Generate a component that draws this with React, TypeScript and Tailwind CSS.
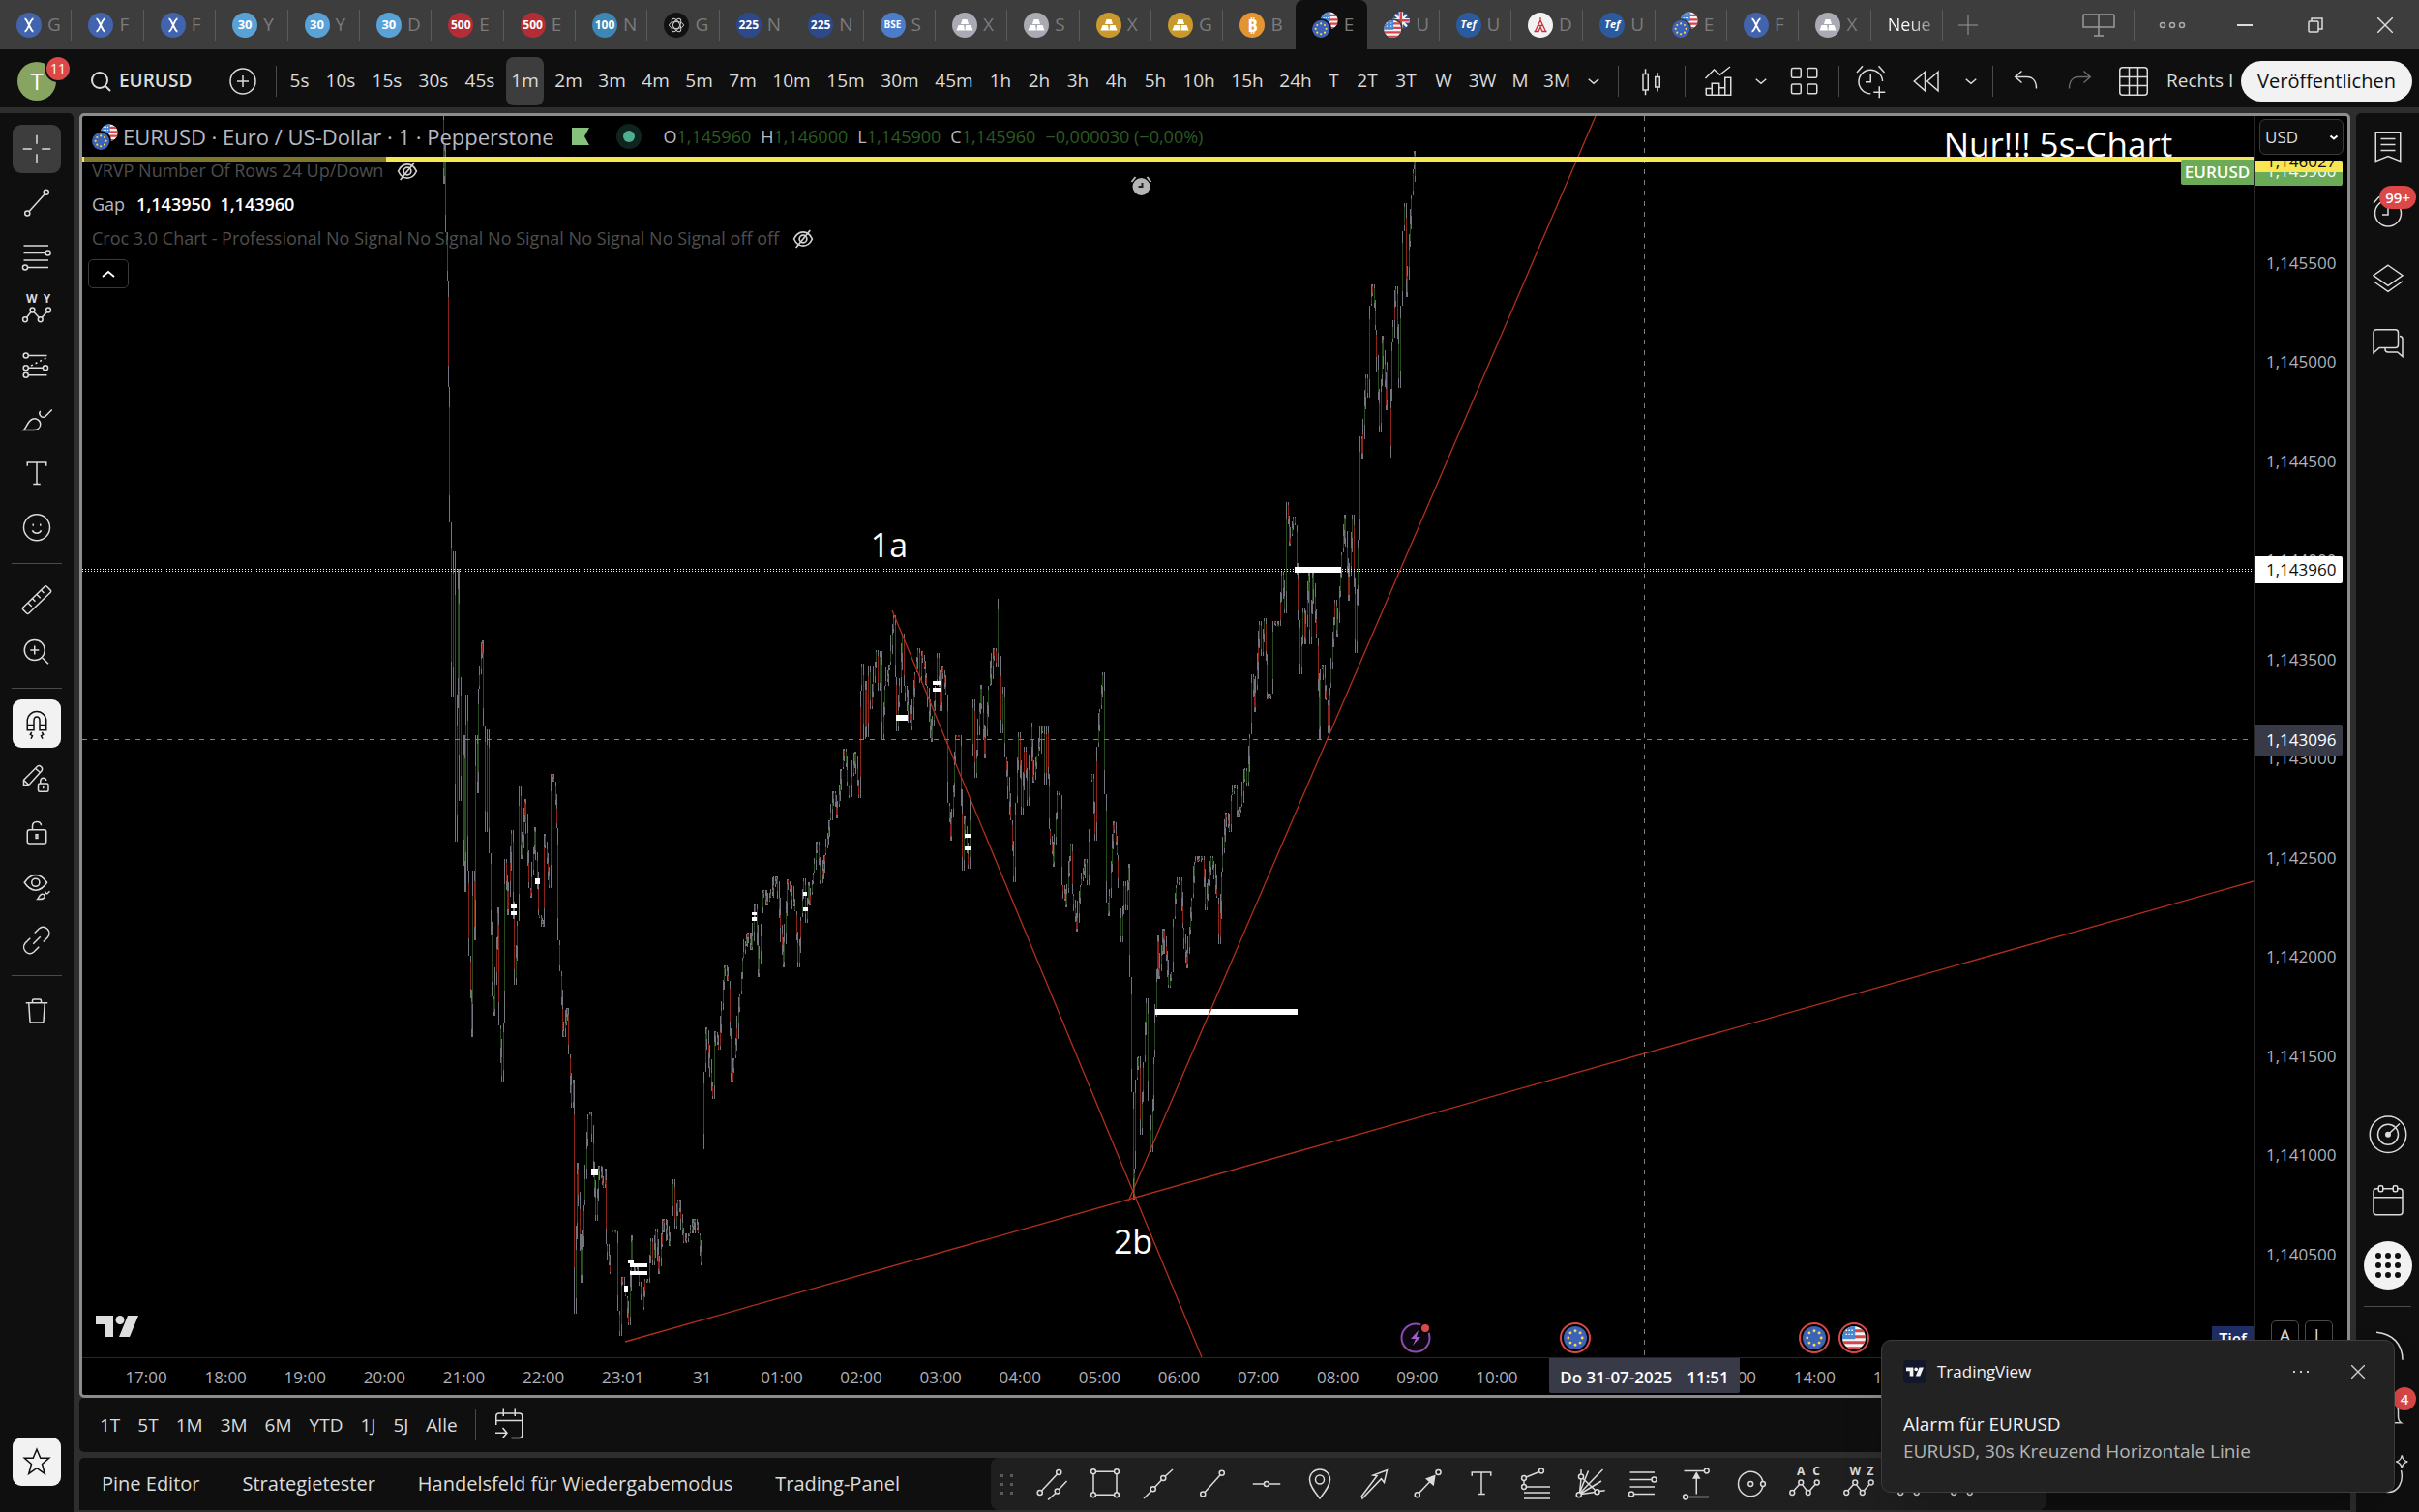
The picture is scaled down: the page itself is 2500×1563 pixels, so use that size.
import { useMemo, useState, type ReactNode } from "react";

type TabIcon = "x" | "30" | "500" | "100" | "225" | "ai" | "bse" | "silver" | "gold" | "btc" | "eu" | "uk" | "tef" | "dax";

const TABS: [TabIcon, string][] = [
  ["x", "G"],
  ["x", "F"],
  ["x", "F"],
  ["30", "Y"],
  ["30", "Y"],
  ["30", "D"],
  ["500", "E"],
  ["500", "E"],
  ["100", "N"],
  ["ai", "G"],
  ["225", "N"],
  ["225", "N"],
  ["bse", "S"],
  ["silver", "X"],
  ["silver", "S"],
  ["gold", "X"],
  ["gold", "G"],
  ["btc", "B"],
  ["eu", "E"],
  ["uk", "U"],
  ["tef", "U"],
  ["dax", "D"],
  ["tef", "U"],
  ["eu", "E"],
  ["x", "F"],
  ["silver", "X"],
];
const ACTIVE_TAB = 18;

const INTERVALS: { width: string; items: string[] }[] = [
  { width: "w-[37px]", items: ["5s"] },
  { width: "w-[48px]", items: ["10s", "15s", "30s", "45s"] },
  { width: "w-[45px]", items: ["1m", "2m", "3m", "4m", "5m", "7m"] },
  { width: "w-[56px]", items: ["10m", "15m", "30m", "45m"] },
  { width: "w-[40px]", items: ["1h", "2h", "3h", "4h", "5h"] },
  { width: "w-[50px]", items: ["10h", "15h", "24h"] },
  { width: "w-[29px]", items: ["T"] },
  { width: "w-[40px]", items: ["2T", "3T"] },
  { width: "w-[38px]", items: ["W"] },
  { width: "w-[42px]", items: ["3W"] },
  { width: "w-[36px]", items: ["M"] },
  { width: "w-[40px]", items: ["3M"] },
];

const RANGES = ["1T", "5T", "1M", "3M", "6M", "YTD", "1J", "5J", "Alle"];

const PRICES = [
  "1,145500",
  "1,145000",
  "1,144500",
  "1,144000",
  "1,143500",
  "1,143000",
  "1,142500",
  "1,142000",
  "1,141500",
  "1,141000",
  "1,140500",
];

// the empty slots lie under the crosshair's date label
const TIMES = [
  "17:00", "18:00", "19:00", "20:00", "21:00", "22:00", "23:01", "31", "01:00",
  "02:00", "03:00", "04:00", "05:00", "06:00", "07:00", "08:00", "09:00", "10:00",
  "", "", "13:00", "14:00", "15:00", "16:00", "17:00", "18:00", "19:00",
];

// swing points of the 1m series in chart units
const SWINGS: number[][] = [
  [458, 112], [459, 190], [460, 150], [461, 240], [463, 290], [464, 400], [465, 540], [467, 720], [469, 570], [471, 870],
  [474, 588], [475, 828], [477, 700], [479, 895], [480, 760], [481, 922], [482, 718], [484, 900], [485, 988], [488, 1072],
  [489, 900], [491, 972], [492, 760], [494, 820], [495, 712], [499, 662], [500, 750], [502, 860], [504, 754], [506, 882],
  [509, 1030], [511, 1050], [515, 938], [516, 1060], [519, 1118], [521, 1058], [522, 888], [525, 946], [529, 858], [532, 1018],
  [535, 952], [537, 812], [539, 888], [543, 826], [547, 918], [549, 928], [553, 855], [557, 946], [562, 958], [563, 862],
  [568, 918], [570, 800], [573, 808], [576, 856], [577, 972], [579, 1004], [582, 1072], [587, 1042], [588, 1090], [591, 1145],
  [593, 1116], [594, 1358], [597, 1202], [601, 1326], [604, 1246], [608, 1152], [611, 1150], [616, 1262], [619, 1205], [624, 1228],
  [626, 1208], [627, 1286], [631, 1317], [633, 1272], [637, 1273], [639, 1355], [641, 1381], [643, 1320], [647, 1340], [650, 1370],
  [653, 1277], [654, 1308], [660, 1315], [664, 1354], [667, 1322], [670, 1326], [673, 1280], [675, 1308], [678, 1270], [681, 1317],
  [686, 1260], [693, 1288], [696, 1219], [698, 1270], [701, 1240], [707, 1285], [713, 1275], [718, 1260], [722, 1275], [725, 1308],
  [726, 1188], [728, 1108], [730, 1062], [737, 1136], [739, 1066], [743, 1085], [749, 998], [753, 1014], [756, 1119], [759, 1094],
  [765, 1028], [768, 990], [773, 964], [777, 982], [781, 934], [784, 1010], [789, 920], [793, 936], [803, 906], [810, 1000],
  [814, 909], [822, 942], [825, 1000], [828, 948], [831, 908], [833, 954], [836, 912], [837, 936], [841, 902], [845, 870],
  [848, 914], [853, 884], [858, 848], [862, 818], [865, 846], [870, 795], [873, 774], [876, 812], [878, 825], [884, 777],
  [888, 825], [890, 714], [891, 686], [893, 764], [895, 704], [896, 762], [898, 688], [900, 733], [906, 672], [908, 714],
  [910, 673], [912, 764], [915, 709], [920, 687], [924, 636], [926, 700], [927, 756], [933, 655], [935, 709], [942, 755],
  [946, 695], [949, 670], [951, 706], [953, 673], [958, 709], [963, 767], [967, 709], [969, 675], [972, 735], [974, 688],
  [978, 718], [980, 830], [983, 869], [988, 760], [992, 760], [995, 900], [997, 844], [1001, 898], [1004, 781], [1006, 723],
  [1008, 804], [1014, 708], [1018, 784], [1022, 709], [1028, 670], [1030, 689], [1032, 619], [1035, 758], [1037, 710], [1039, 783],
  [1045, 848], [1048, 912], [1050, 830], [1053, 757], [1056, 842], [1059, 772], [1062, 833], [1065, 747], [1068, 809], [1072, 781],
  [1078, 750], [1080, 811], [1082, 750], [1085, 857], [1089, 896], [1093, 818], [1096, 822], [1098, 915], [1102, 938], [1107, 872],
  [1109, 924], [1113, 963], [1117, 915], [1122, 888], [1124, 915], [1127, 808], [1129, 800], [1132, 869], [1134, 772], [1137, 733],
  [1140, 695], [1142, 821], [1144, 933], [1146, 947], [1151, 849], [1155, 884], [1159, 974], [1162, 911], [1164, 941], [1167, 893],
  [1168, 1010], [1170, 1129], [1172, 1240], [1173, 1208], [1174, 1116], [1177, 1092], [1179, 1173], [1182, 1098], [1185, 1032], [1187, 1138],
  [1190, 1191], [1193, 1093], [1197, 967], [1198, 1012], [1203, 960], [1208, 1021], [1211, 1005], [1213, 950], [1216, 915], [1220, 907],
  [1223, 959], [1227, 1001], [1232, 928], [1235, 891], [1243, 885], [1246, 941], [1252, 885], [1258, 928], [1260, 976], [1263, 901],
  [1267, 840], [1271, 860], [1273, 822], [1277, 811], [1279, 845], [1283, 834], [1287, 794], [1289, 813], [1292, 759], [1294, 697],
  [1297, 736], [1302, 642], [1304, 678], [1307, 639], [1310, 723], [1314, 717], [1316, 642], [1322, 647], [1325, 591], [1328, 634],
  [1330, 519], [1333, 564], [1337, 534], [1339, 543], [1342, 641], [1344, 697], [1347, 628], [1349, 666], [1353, 591], [1354, 666],
  [1357, 591], [1361, 660], [1364, 764], [1365, 692], [1367, 687], [1371, 724], [1373, 758], [1375, 711], [1380, 620], [1382, 659],
  [1387, 571], [1390, 532], [1394, 621], [1398, 532], [1401, 675], [1404, 558], [1406, 451], [1408, 474], [1412, 387], [1414, 411],
  [1416, 316], [1419, 294], [1422, 341], [1426, 447], [1429, 347], [1433, 424], [1434, 374], [1436, 473], [1439, 354], [1443, 296],
  [1446, 401], [1448, 316], [1450, 239], [1452, 210], [1454, 307], [1459, 202], [1461, 175], [1462, 156], [1463, 188],
];

// x, y, width, height of the open gaps
const GAPS: number[][] = [
  [1195, 1043, 147, 6],
  [1339, 586, 48, 6],
  [927, 739, 12, 6],
  [965, 704, 8, 4],
  [965, 711, 8, 4],
  [998, 862, 6, 4],
  [998, 875, 6, 4],
  [831, 922, 4, 4],
  [831, 938, 5, 4],
  [529, 935, 6, 4],
  [529, 942, 6, 4],
  [554, 908, 5, 6],
  [778, 943, 5, 3],
  [778, 948, 5, 4],
  [612, 1208, 7, 7],
  [650, 1302, 6, 4],
  [652, 1306, 18, 4],
  [652, 1314, 18, 4],
  [646, 1329, 4, 7],
];

type Bar = { x: number; high: number; low: number; bodyTop: number; bodyBottom: number; up: boolean };

function buildBars(): Bar[] {
  let seed = 7;
  const random = () => {
    seed = (seed * 16807) % 2147483647;
    return seed / 2147483647;
  };

  const bars: Bar[] = [];
  for (let i = 1; i < SWINGS.length; i++) {
    const [x0, y0] = SWINGS[i - 1];
    const [x1, y1] = SWINGS[i];
    const steps = Math.max(1, Math.round((x1 - x0) / 1.4));
    for (let s = 0; s < steps; s++) {
      const from = y0 + ((y1 - y0) * s) / steps;
      const to = y0 + ((y1 - y0) * (s + 1)) / steps;
      const wick = 3 + random() * 13;
      const top = Math.min(from, to);
      const bottom = Math.max(from, to);
      const limitTop = Math.min(y0, y1);
      const limitBottom = Math.max(y0, y1);
      bars.push({
        x: Math.round(x0 + ((x1 - x0) * (s + 1)) / steps),
        high: Math.max(limitTop, top - wick),
        low: Math.min(limitBottom, bottom + wick * random()),
        bodyTop: top + (bottom - top) * 0.15,
        bodyBottom: bottom - (bottom - top) * 0.2,
        up: random() > 0.25 ? to < from : to > from,
      });
    }
  }
  return bars;
}

const GLYPHS = {
  cross: <path d="M14 4.5v6M14 17.5v6M4.5 14h6M17.5 14h6" />,
  trend: (
    <>
      <circle cx="20.5" cy="6.5" r="1.7" />
      <circle cx="7.5" cy="21" r="1.7" />
      <path d="M8.8 19.7 19.4 7.9" />
    </>
  ),
  fib: (
    <>
      <path d="M5 6h17M5 11h15M5 16h17M8 21h14" />
      <circle cx="21.7" cy="11" r="1.7" />
      <circle cx="6" cy="21" r="1.7" />
    </>
  ),
  waveWY: (
    <>
      <circle cx="6" cy="19.500" r="1.6" />
      <circle cx="11" cy="13" r="1.6" />
      <circle cx="16.500" cy="19.500" r="1.6" />
      <circle cx="22" cy="13" r="1.6" />
      <path d="m7 18.200 3-3.900M12 14.300l3.500 3.900M17.500 18.200l3.500-3.900" />
      <Label x={10.5} text="W" />
      <Label x={21} text="Y" />
    </>
  ),
  waveAC: (
    <>
      <circle cx="5.500" cy="20" r="1.600" />
      <circle cx="11.500" cy="13" r="1.600" />
      <circle cx="16.500" cy="20" r="1.600" />
      <circle cx="22.500" cy="13" r="1.600" />
      <path d="m6.500 18.700 4-4.500M12.300 14.400l3.300 4.300M17.500 18.700l4-4.500" />
      <Label x={11.5} text="A" />
      <Label x={22} text="C" />
    </>
  ),
  waveWZ: (
    <>
      <circle cx="5.500" cy="20" r="1.600" />
      <circle cx="11.500" cy="13" r="1.600" />
      <circle cx="16.500" cy="20" r="1.600" />
      <circle cx="22.500" cy="13" r="1.600" />
      <path d="m6.500 18.700 4-4.500M12.300 14.400l3.300 4.300M17.500 18.700l4-4.500" />
      <Label x={11.5} text="W" />
      <Label x={22} text="Z" />
    </>
  ),
  position: (
    <>
      <circle cx="6.500" cy="7" r="1.700" />
      <circle cx="6.500" cy="15.500" r="1.700" />
      <circle cx="20" cy="15.500" r="1.700" />
      <circle cx="6.500" cy="20.500" r="1.700" />
      <path d="M8.200 7H21M8.200 15.500h10M8.200 20.500H21" />
      <path strokeDasharray="1.400 2" d="M10 14 21 8.500" />
    </>
  ),
  brush: (
    <path d="M5 21c2-1.500 2.500-6 6-7.500 2.500-1 5.500.8 5.500 3.500s-2.500 4-5 4zM16.500 8c-1.500 1.500 0 5 3 4L24.500 7" />
  ),
  text: <path d="M7.500 8.500V6h13v2.500M14 6v15M11.500 21h5" />,
  smile: (
    <>
      <circle cx="14" cy="13.500" r="9" />
      <path d="M11 15.500c.8 2.600 5.200 2.600 6 0M11.500 11v1.500M16.500 11v1.500" />
    </>
  ),
  ruler: <path d="m4.500 20 15-14.500a1 1 0 0 1 1.400 0l2.600 2.600a1 1 0 0 1 0 1.400L8.500 24a1 1 0 0 1-1.400 0l-2.600-2.600a1 1 0 0 1 0-1.400zM8 16.800l2.500 2.500M11 13.800l2 2M14 11l2.500 2.500M17 8l2 2" />,
  zoom: (
    <>
      <circle cx="12.500" cy="12" r="7" />
      <path d="m17.800 17.300 4.200 4.200M12.500 9v6M9.500 12h6" />
    </>
  ),
  magnet: (
    <path d="M7.500 18.500v-7.300a6.600 6.600 0 0 1 13 0v7.300H16v-6.500c0-3.500-4-3.500-4 0v6.500zM7.500 15H12M16 15h4.500M10.500 20l-1 1.500 1.500 1-1 2M17.500 20l1 1.500-1.500 1 1 2" />
  ),
  pencilLock: (
    <>
      <path d="M5 19v-3.500L14.500 6c1.500-1 4 1 3 3L9 18.500 8 19zM13 7.500l3.500 3M5 15.500 8.500 19" />
      <rect x="15" y="18" width="7" height="5.500" rx="1" />
      <path d="M16.500 18v-1.500c0-3 4-3 4-.5M18.500 20v1.500" />
    </>
  ),
  lock: (
    <>
      <rect x="7.500" y="12.500" width="13" height="9.500" rx="1.500" />
      <path d="M11 12.500V10c0-4 6-4 6-.5" />
      <rect x="13.400" y="15.800" width="1.200" height="2.500" />
    </>
  ),
  eye: (
    <>
      <path d="M5.500 11.500c4.500-7 11-7 15.500 0-4.500 7-11 7-15.500 0z" />
      <circle cx="13.200" cy="11.500" r="2.700" />
      <path d="M14.500 23c1-1 1-3 3-3.500 2-.3 2.700 2 1 3-1 .6-2.500.5-4 .5zM20 17.500c-.5 1 .5 2 1.500 1.500l1.500-1.500" />
    </>
  ),
  link: <path d="m12.500 9 3-3c4-3.500 9.500 2 6 6l-3 3M15.500 18.500l-3.500 3.500c-4 3.500-9-2-6-6L9.500 12.500M11.500 16.500l5-5" />,
  trash: <path d="M6.500 8.500h15M11 8.500V7c0-.8.400-1 1-1h4c.6 0 1 .2 1 1v1.500M8.500 8.500l.8 12.500c0 .6.300 1 1 1h7.400c.7 0 1-.4 1-1l.8-12.500" />,
  star: <path d="m14 5.500 2.500 6h6l-4.800 4.200 1.800 6.600-5.500-3.800-5.500 3.800 1.800-6.600L5.500 11.500h6z" />,
  channel: (
    <>
      <circle cx="19.500" cy="6" r="1.700" />
      <circle cx="6.500" cy="20" r="1.700" />
      <circle cx="18.500" cy="19" r="1.700" />
      <path d="M7.700 18.700 18.300 7.300M12 25l5.300-4.700M19.700 17.700 25 12" />
    </>
  ),
  rectangle: (
    <>
      <path d="M7.500 5.500h13M7.500 21.500h13M6 7v13M22 7v13" />
      <circle cx="6" cy="5.500" r="1.600" />
      <circle cx="22" cy="5.500" r="1.600" />
      <circle cx="6" cy="21.500" r="1.600" />
      <circle cx="22" cy="21.500" r="1.600" />
    </>
  ),
  extended: (
    <>
      <circle cx="17.500" cy="10" r="1.700" />
      <circle cx="10.500" cy="17.500" r="1.700" />
      <path d="m4 24 5.300-5.200M11.700 16.200l4.600-4.900M18.700 8.800 24 4" />
    </>
  ),
  hline: (
    <>
      <circle cx="14" cy="14" r="1.700" />
      <path d="M4.500 14h7.800M15.700 14h7.800" />
    </>
  ),
  pin: (
    <>
      <path d="M14 24C10 19 7 15 7 11a7 7 0 0 1 14 0c0 4-3 8-7 13z" />
      <circle cx="14" cy="11" r="3" />
    </>
  ),
  arrowMarker: <path d="M23 4.500 21 13l-2-2.500L6 24l-.5-1.500L16 8.500 13.500 8z" />,
  arrow: (
    <>
      <circle cx="6.500" cy="21.500" r="1.700" />
      <circle cx="21" cy="6" r="1.700" />
      <path d="M7.800 20.200 17 10.500" />
      <path fill="currentColor" d="m18.500 8.500-1 6-4.500-4z" />
    </>
  ),
  trendFib: (
    <>
      <circle cx="6" cy="10" r="1.600" />
      <circle cx="6" cy="16" r="1.600" />
      <circle cx="18" cy="5" r="1.600" />
      <path d="m7.500 9.300 9-3.600M6 11.600v2.800M7.600 16H24M6 20h18M6 24h18" />
    </>
  ),
  fan: (
    <>
      <circle cx="6.500" cy="21.500" r="1.700" />
      <circle cx="8" cy="9" r="1.700" />
      <circle cx="19" cy="19.500" r="1.700" />
      <path d="M8 4v3.500M7 20 8 10.700M7 20 13 5M7.500 20 23 4M8 20.500 22 12M8 21l9.500-1.300M9.500 10.500l8 7.500M20.500 19l4-.5" />
    </>
  ),
  measure: (
    <>
      <circle cx="6" cy="23" r="1.600" />
      <circle cx="20.500" cy="5" r="1.600" />
      <path d="M5 5h14M7.500 23H22M13.500 21V7.500" />
      <path fill="currentColor" d="M11.500 10 13.500 6.500 15.500 10z" />
    </>
  ),
  circle: (
    <>
      <circle cx="13.500" cy="14" r="8.500" />
      <circle cx="13.500" cy="14" r="1.600" />
      <circle cx="22" cy="14" r="1.600" fill="#1f1f1f" />
    </>
  ),
  candles: <path d="M8 9h3.500v11H8zM9.700 5.500V9M9.700 20v3.500M16.500 11h3v7h-3zM18 8v3M18 18v3" />,
  indicators: <path d="m5 12 6-6 4 3.500L22 4M5.500 23.500v-4.500h4v4.500M9.500 23.500v-8h5v8M14.500 23.500v-5h4v5M18.500 18.500V11.500h4v12H5.500" />,
  tiles: (
    <>
      <rect x="5" y="5" width="6.500" height="6.500" rx="1" />
      <rect x="16" y="5" width="6.500" height="6.500" rx="1" />
      <rect x="5" y="16" width="6.500" height="6.500" rx="1" />
      <rect x="16" y="16" width="6.500" height="6.500" rx="1" />
    </>
  ),
  alertPlus: <path d="M13.500 22.500A8.200 8.200 0 1 1 21.700 14M13.500 9v5.500H10M4 8l4-4.500M19 3.500 23 8M19.500 17.500v8M15.500 21.500h8" />,
  rewind: <path d="m13 7.500-7.500 6.500L13 20.500zM22 7.500 14.500 14l7.500 6.500z" />,
  undo: <path d="m11 7-4.500 4 4.500 4M6.500 11h8c4 0 6.500 3 6.500 8" />,
  redo: <path d="m17 7 4.500 4-4.500 4M21.500 11h-8c-4 0-6.500 3-6.500 8" />,
  layout: <path d="M6.500 4.500h15a2 2 0 0 1 2 2v15a2 2 0 0 1-2 2h-15a2 2 0 0 1-2-2v-15a2 2 0 0 1 2-2zM4.500 11h19M4.500 17h19M11 11v12.500M17 4.500v19M11 4.500V11" />,
  chevron: <path d="m10.500 12.500 3.500 3 3.500-3" />,
  goto: <path d="M4.500 14V8a2 2 0 0 1 2-2h14a2 2 0 0 1 2 2v13a2 2 0 0 1-2 2H15M4.500 11h18M9.500 3v5M17.500 3v5M4 19.500h8M9 16l3 3.500L9 23" />,
  watchlist: <path d="M5.500 4.500h17v20L14 21l-8.500 3.500zM9 9h10M9 13h10M9 17h10" />,
  alarm: (
    <>
      <circle cx="14" cy="15" r="9" />
      <path d="M14 10v6h-4M4 8l4-4.500M20 3.500 24 8" />
    </>
  ),
  layers: <path d="m14 5.500 10 7-10 7-10-7zM4 16.500l10 7 10-7" />,
  chat: <path d="M4 6.500a2 2 0 0 1 2-2h13a2 2 0 0 1 2 2V15a2 2 0 0 1-2 2H8l-4 3.500zM12 17v1a2 2 0 0 0 2 2h6.500l3.500 3V11a2 2 0 0 0-2-2" />,
  radar: (
    <>
      <circle cx="14" cy="14.500" r="12.500" />
      <circle cx="14" cy="14.500" r="7" />
      <circle cx="14" cy="14.500" r="1.500" fill="currentColor" />
      <path d="M14 14.500 22 7" />
    </>
  ),
  calendar: (
    <>
      <path d="M7.500 6.500H6a2 2 0 0 0-2 2v14a2 2 0 0 0 2 2h16a2 2 0 0 0 2-2v-14a2 2 0 0 0-2-2h-1.500M10.500 6.500h7M4 12.500h20" />
      <rect x="7.500" y="4.500" width="3" height="4" rx="1" />
      <rect x="17.500" y="4.500" width="3" height="4" rx="1" />
    </>
  ),
  stream: <path d="M6 3.500c11 1 18 8 18 19M6 10.500c6 1 10 5 11 11M6 17.500c2 .5 3.500 2 4 4" />,
  bell: <path d="M5 20.500h18c-1.500-1-2-2.500-2-4.500v-4a7 7 0 0 0-14 0v4c0 2-.5 3.500-2 4.500zM11.500 21c0 3 5 3 5 0" />,
  spark: <path d="M23 8c2 8-2 15-9 15S3 16 6 9M23.500-2.500c.5 3 1.500 4 4 4.500-2.500.5-3.500 1.500-4 4.500-.5-3-1.500-4-4-4.500 2.500-.5 3.500-1.500 4-4.500z" />,
  hidden: (
    <>
      <path d="M3 14c5-11 17-11 22 0-5 11-17 11-22 0z" />
      <circle cx="14" cy="14" r="4.500" />
      <path d="M5.500 24.500 22.500 3.500" />
    </>
  ),
};

type GlyphName = keyof typeof GLYPHS;

function Label({ x, text }: { x: number; text: string }) {
  return (
    <text x={x} y={8} textAnchor="middle" fontSize={8} fontWeight={700} fill="currentColor" stroke="none">
      {text}
    </text>
  );
}

function Glyph({ name, className = "size-[42px] stroke-1" }: { name: GlyphName; className?: string }) {
  return (
    <svg viewBox="0 0 28 28" fill="none" stroke="currentColor" className={`shrink-0 overflow-visible ${className}`} aria-hidden="true">
      {GLYPHS[name]}
    </svg>
  );
}

function IconButton({ name, label, className }: { name: GlyphName; label: string; className: string }) {
  return (
    <button aria-label={label} className={`flex h-[50px] shrink-0 items-center justify-center ${className}`}>
      <Glyph name={name} />
    </button>
  );
}

function Divider() {
  return <span className="mx-[7px] h-8 w-px shrink-0 bg-[#4a4a4a]" />;
}

function EuFlag() {
  const stars = Array.from({ length: 8 }, (_, i) => (i * Math.PI) / 4);
  return (
    <>
      <circle r="10" fill="#3d63b8" />
      {stars.map((a) => (
        <circle key={a} cx={6 * Math.cos(a)} cy={6 * Math.sin(a)} r="1.200" fill="#f5d94e" />
      ))}
    </>
  );
}

function UsFlag() {
  return (
    <>
      <clipPath id="round">
        <circle r="10" />
      </clipPath>
      <g clipPath="url(#round)">
        <rect x="-10" y="-10" width="20" height="20" fill="#f4f4f4" />
        <path d="M-10-6h20M-10-1h20M-10 4h20M-10 9h20" stroke="#d9434a" strokeWidth="2.500" />
        <rect x="-10" y="-10" width="11" height="11" fill="#4a86d2" />
        <path d="M-7-6.500h6M-7-3h6" stroke="#fff" strokeWidth="1.200" strokeDasharray="1.200 1.200" />
      </g>
    </>
  );
}

function UkFlag() {
  return (
    <>
      <circle r="10" fill="#2f4f9e" />
      <path d="M-7-7 7 7M7-7-7 7" stroke="#f4f4f4" strokeWidth="2.500" />
      <path d="M0-10v20M-10 0h20" stroke="#f4f4f4" strokeWidth="5" />
      <path d="M0-10v20M-10 0h20" stroke="#d9434a" strokeWidth="2.800" />
    </>
  );
}

function PairIcon({ front, back, ring, className }: { front: ReactNode; back: ReactNode; ring: string; className: string }) {
  return (
    <svg viewBox="0 0 28 28" className={`shrink-0 ${className}`} aria-hidden="true">
      <g transform="translate(18.500 9.500) scale(.92)">{back}</g>
      <circle cx="10" cy="18" r="10.500" fill={ring} />
      <g transform="translate(9.500 18.500) scale(.94)">{front}</g>
    </svg>
  );
}

function Round({ className, children }: { className: string; children: ReactNode }) {
  return (
    <span className={`flex size-[26px] shrink-0 items-center justify-center rounded-full font-bold text-white ${className}`}>
      {children}
    </span>
  );
}

function Bars() {
  return (
    <svg viewBox="0 0 20 20" className="size-5" fill="#fff" aria-hidden="true">
      <path d="M7.500 4h5l1.500 5H6zM3.500 10h5.500l1 5.500H1.500zM11 10h5.500l2 5.500H10.500z" />
    </svg>
  );
}

function TabGlyph({ icon, active }: { icon: TabIcon; active: boolean }) {
  const ring = active ? "#0f0f0f" : "#3d3d3d";
  switch (icon) {
    case "x":
      return (
        <Round className="bg-[#4263ad]">
          <svg viewBox="0 0 20 20" className="size-5" fill="none" stroke="#fff" strokeWidth="1.800" aria-hidden="true">
            <path d="M5.500 3.500c2 0 2.500 3 4.500 6.500s2.500 6.500 4.500 6.500M14.500 3.500c-2 0-3 3-4.500 6.500s-2.500 6.500-4.500 6.500" />
          </svg>
        </Round>
      );
    case "30":
      return <Round className="bg-[#58a2d8] text-[13px]">30</Round>;
    case "500":
      return <Round className="bg-[#b42c35] text-xs">500</Round>;
    case "100":
      return <Round className="bg-[#3c87b5] text-xs">100</Round>;
    case "225":
      return <Round className="bg-[#2c4a8b] text-xs">225</Round>;
    case "bse":
      return <Round className="bg-[#4c7dca] text-[10px]">BSE</Round>;
    case "tef":
      return <Round className="bg-[#2c5a9e] text-[11px] italic">Tef</Round>;
    case "ai":
      return (
        <Round className="bg-[#111]">
          <svg viewBox="0 0 20 20" className="size-5" fill="none" stroke="#ccc" aria-hidden="true">
            <ellipse cx="10" cy="10" rx="7.500" ry="3.500" />
            <ellipse cx="10" cy="10" rx="7.500" ry="3.500" transform="rotate(60 10 10)" />
            <ellipse cx="10" cy="10" rx="7.500" ry="3.500" transform="rotate(120 10 10)" />
          </svg>
        </Round>
      );
    case "silver":
      return (
        <Round className="bg-[#aaaab4]">
          <Bars />
        </Round>
      );
    case "gold":
      return (
        <Round className="bg-[#c9992c]">
          <Bars />
        </Round>
      );
    case "btc":
      return <Round className="bg-[#e59432] text-lg">₿</Round>;
    case "dax":
      return (
        <Round className="bg-[#f2f2f2]">
          <svg viewBox="0 0 20 20" className="size-5" fill="none" stroke="#c8323a" strokeWidth="1.300" aria-hidden="true">
            <path d="M10 2v5M10 5 4.500 16.500M10 5l5.500 11.500M3.500 16.500H8L10 12l2 4.500h4.500M8 10.500h4" />
          </svg>
        </Round>
      );
    case "uk":
      return <PairIcon front={<UsFlag />} back={<UkFlag />} ring={ring} className="size-[27px]" />;
    default:
      return <PairIcon front={<EuFlag />} back={<UsFlag />} ring={ring} className="size-[27px]" />;
  }
}

function TabStrip() {
  return (
    <header className="flex h-[51px] shrink-0 items-center bg-[#3d3d3d]">
      <nav className="flex h-full w-[2008px] shrink-0">
        {TABS.map(([icon, letter], i) => (
          <button
            key={i}
            className={`flex min-w-0 flex-1 items-center justify-center ${i === ACTIVE_TAB ? "rounded-t-[8px] bg-[#0f0f0f]" : ""}`}
          >
            <span className="flex flex-1 items-center gap-[6px] pl-[17px]">
              <TabGlyph icon={icon} active={i === ACTIVE_TAB} />
              <span className="text-[19px] text-[#7b7b7b]">{letter}</span>
            </span>
            {i === ACTIVE_TAB || i === ACTIVE_TAB - 1 ? null : <span className="h-8 w-px bg-[#5a5a5a]" />}
          </button>
        ))}
        <button className="flex min-w-0 flex-1 items-center">
          <span className="flex-1 bg-gradient-to-r from-white from-50% to-[#5a5a5a] bg-clip-text pl-[17px] text-left text-[18px] font-medium text-transparent">
            Neue
          </span>
          <span className="h-8 w-px bg-[#5a5a5a]" />
        </button>
      </nav>
      <svg viewBox="0 0 20 20" className="ml-[16px] size-5 text-[#9a9a9a]" stroke="currentColor" aria-hidden="true">
        <path d="M10 0v20M0 10h20" />
      </svg>
      <svg viewBox="0 0 36 26" className="ml-auto h-[26px] w-9 text-[#9a9a9a]" fill="none" stroke="currentColor" strokeWidth="1.500" aria-hidden="true">
        <path d="M3 2h30a1 1 0 0 1 1 1v12H2V3a1 1 0 0 1 1-1zM18 2v22M13 24h10" />
      </svg>
      <span className="ml-[18px] h-8 w-px bg-[#5a5a5a]" />
      <svg viewBox="0 0 30 10" className="ml-[24px] h-[10px] w-[30px]" fill="none" stroke="#a9a9a9" strokeWidth="1.500" aria-hidden="true">
        <circle cx="5" cy="5" r="2.500" />
        <circle cx="15" cy="5" r="2.500" />
        <circle cx="25" cy="5" r="2.500" />
      </svg>
      <button aria-label="Minimieren" className="ml-[23px] flex h-full w-[73px] items-center justify-center">
        <span className="h-[2px] w-4 bg-[#dcdcdc]" />
      </button>
      <button aria-label="Wiederherstellen" className="flex h-full w-[73px] items-center justify-center">
        <svg viewBox="0 0 18 18" className="size-[18px]" fill="none" stroke="#dcdcdc" strokeWidth="1.500" aria-hidden="true">
          <rect x="2" y="5" width="10" height="11" rx="1" />
          <path d="M5 5V2h11v11h-4" />
        </svg>
      </button>
      <button aria-label="Schließen" className="flex h-full w-[71px] items-center justify-center">
        <svg viewBox="0 0 16 16" className="size-4" stroke="#dcdcdc" strokeWidth="1.500" aria-hidden="true">
          <path d="m0 0 16 16M16 0 0 16" />
        </svg>
      </button>
    </header>
  );
}

function TopBar() {
  const [interval, setInterval] = useState("1m");

  return (
    <div className="flex h-[60px] shrink-0 items-center bg-[#0f0f0f] pt-[5px]">
      <button aria-label="Profil" className="relative ml-[18px] flex size-10 shrink-0 items-center justify-center rounded-full bg-[#87a560] text-2xl text-white">
        T
        <span className="absolute -top-[7px] left-7 flex size-[28px] items-center justify-center rounded-full border-2 border-[#0f0f0f] bg-[#dc4747] text-sm">
          11
        </span>
      </button>
      <button className="ml-[34px] flex h-10 w-[130px] shrink-0 items-center gap-[7px] text-[19px] font-semibold">
        <svg viewBox="0 0 24 24" className="size-6 shrink-0" fill="none" stroke="currentColor" strokeWidth="2" aria-hidden="true">
          <circle cx="11" cy="11" r="8" />
          <path d="m17 17 5 5" />
        </svg>
        EURUSD
      </button>
      <button aria-label="Symbol vergleichen" className="ml-[14px] shrink-0">
        <svg viewBox="0 0 30 30" className="size-[30px]" fill="none" stroke="currentColor" strokeWidth="1.500" aria-hidden="true">
          <circle cx="15" cy="15" r="13" />
          <path d="M15 9v12M9 15h12" />
        </svg>
      </button>
      <span className="mr-[5px] ml-[19px] h-8 w-px shrink-0 bg-[#4a4a4a]" />
      {INTERVALS.map((group) =>
        group.items.map((item) => (
          <button key={item} onClick={() => setInterval(item)} className={`flex h-[50px] shrink-0 items-center justify-center px-[3px] text-[19px] font-medium ${group.width}`}>
            <span className={`flex h-full w-full items-center justify-center rounded-[8px] ${interval === item ? "bg-[#3d3d3d]" : ""}`}>{item}</span>
          </button>
        ))
      )}
      <IconButton name="chevron" label="Intervalle" className="w-[36px]" />
      <Divider />
      <IconButton name="candles" label="Kerzen" className="w-[54px]" />
      <Divider />
      <IconButton name="indicators" label="Indikatoren" className="w-[54px]" />
      <IconButton name="chevron" label="Favoriten" className="w-[34px]" />
      <IconButton name="tiles" label="Vorlagen" className="w-[56px]" />
      <Divider />
      <IconButton name="alertPlus" label="Alarm erstellen" className="w-[52px]" />
      <IconButton name="rewind" label="Wiedergabe" className="w-[62px]" />
      <IconButton name="chevron" label="Wiedergabe-Optionen" className="w-[30px]" />
      <Divider />
      <IconButton name="undo" label="Rückgängig" className="w-[54px]" />
      <IconButton name="redo" label="Wiederholen" className="w-[56px] text-[#6a6a6a]" />
      <IconButton name="layout" label="Layout" className="w-[56px]" />
      <button className="ml-[6px] min-w-0 flex-1 overflow-hidden text-left text-[19px] font-medium whitespace-nowrap">Rechts I</button>
      <button className="mr-[7px] flex h-[42px] w-[177px] shrink-0 items-center justify-center rounded-full bg-[#f2f2f2] text-[20px] font-medium text-[#0f0f0f]">
        Veröffentlichen
      </button>
    </div>
  );
}

function ToolButton({ name, label, pressed, active }: { name: GlyphName; label: string; pressed?: boolean; active?: boolean }) {
  const look = pressed ? "bg-[#3d3d3d]" : active ? "bg-[#f2f2f2] text-[#0f0f0f]" : "";
  return (
    <div className="flex h-[56px] shrink-0 items-center justify-center">
      <button aria-label={label} className={`flex size-[50px] items-center justify-center rounded-[9px] ${look}`}>
        <Glyph name={name} />
      </button>
    </div>
  );
}

function ToolDivider() {
  return <hr className="mx-3 my-[8px] h-px shrink-0 border-0 bg-[#4a4a4a]" />;
}

function LeftToolbar() {
  return (
    <aside className="flex w-[76px] shrink-0 flex-col rounded-tr-[5px] bg-[#0f0f0f] pt-[9px]">
      <ToolButton name="cross" label="Fadenkreuz" pressed />
      <ToolButton name="trend" label="Trendlinie" />
      <ToolButton name="fib" label="Fibonacci" />
      <ToolButton name="waveWY" label="Muster" />
      <ToolButton name="position" label="Prognose" />
      <ToolButton name="brush" label="Pinsel" />
      <ToolButton name="text" label="Text" />
      <ToolButton name="smile" label="Symbole" />
      <ToolDivider />
      <ToolButton name="ruler" label="Messen" />
      <ToolButton name="zoom" label="Vergrößern" />
      <ToolDivider />
      <ToolButton name="magnet" label="Magnet" active />
      <ToolButton name="pencilLock" label="Zeichenmodus" />
      <ToolButton name="lock" label="Sperren" />
      <ToolButton name="eye" label="Ausblenden" />
      <ToolButton name="link" label="Synchronisieren" />
      <ToolDivider />
      <ToolButton name="trash" label="Löschen" />
      <div className="mt-auto mb-6">
        <ToolButton name="star" label="Favoriten-Leiste" active />
      </div>
    </aside>
  );
}

function SideButton({ name, label, badge }: { name: GlyphName; label: string; badge?: string }) {
  return (
    <button aria-label={label} className="relative flex h-[68px] w-full shrink-0 items-center justify-center">
      <Glyph name={name} />
      {badge ? (
        <span className="absolute top-[7px] right-[3px] flex h-6 min-w-6 items-center justify-center rounded-full bg-[#dc4747] px-[6px] text-[15px] font-semibold text-white">
          {badge}
        </span>
      ) : null}
    </button>
  );
}

function RightToolbar() {
  return (
    <aside className="flex w-[65px] shrink-0 flex-col rounded-tl-[5px] bg-[#0f0f0f]">
      <SideButton name="watchlist" label="Watchlist" />
      <SideButton name="alarm" label="Alarme" badge="99+" />
      <SideButton name="layers" label="Objektbaum" />
      <SideButton name="chat" label="Chats" />
      <div className="mt-auto flex flex-col items-center">
        <SideButton name="radar" label="Screener" />
        <SideButton name="calendar" label="Kalender" />
        <div className="flex h-[68px] items-center">
          <button aria-label="Mehr" className="flex size-[50px] items-center justify-center rounded-full bg-[#f2f2f2]">
            <span className="grid grid-cols-3 gap-1">
              {Array.from({ length: 9 }, (_, i) => (
                <span key={i} className="size-[6px] rounded-full bg-[#0f0f0f]" />
              ))}
            </span>
          </button>
        </div>
        <hr className="my-[8px] h-px w-[49px] border-0 bg-[#4a4a4a]" />
        <SideButton name="stream" label="Streams" />
        <SideButton name="bell" label="Mitteilungen" badge="4" />
        <SideButton name="spark" label="Hilfe" />
      </div>
    </aside>
  );
}

function Logo({ className }: { className: string }) {
  return (
    <svg viewBox="0 0 44 24" className={className} fill="currentColor" aria-hidden="true">
      <path d="M0 1h18v22H9V10H0zM33 1h11l-9 22H24z" />
      <circle cx="25" cy="5.500" r="4.500" />
    </svg>
  );
}

function EventPin({ x, children }: { x: number; children: ReactNode }) {
  return (
    <g transform={`translate(${x} 1383)`}>
      <circle r="15" fill="#000" stroke="#dc4747" strokeWidth="2" />
      <g transform="scale(1.200)">{children}</g>
    </g>
  );
}

function ChartCanvas() {
  const bars = useMemo(buildBars, []);

  return (
    <svg viewBox="86 120 2244 1283" preserveAspectRatio="xMinYMin slice" className="absolute inset-0 h-full w-full" role="img" aria-label="EURUSD 1m">
      <g shapeRendering="crispEdges">
        {bars.map((bar, i) => (
          <g key={i}>
            <rect x={bar.x} y={bar.high} width={1} height={Math.max(2, bar.low - bar.high)} fill="#74747f" />
            <rect x={bar.x} y={bar.bodyTop} width={1} height={Math.max(2, bar.bodyBottom - bar.bodyTop)} fill={bar.up ? "#264a1d" : "#8a2418"} />
          </g>
        ))}
        {GAPS.map(([x, y, w, h]) => (
          <rect key={`${x}-${y}`} x={x} y={y} width={w} height={h} fill="#fff" />
        ))}
        <path d="M86 588.500H2330" stroke="#fff" strokeDasharray="1 2" />
        <path d="M86 590.500H2330" stroke="#fff" strokeDasharray="1 2" />
        <path d="M86 764.500H2330M1700.500 120V1403" stroke="#7b7f88" strokeDasharray="5 6" />
      </g>
      <path d="M923 631 1243 1403M1167 1242 1650 120M647 1387 2330 911" stroke="#b22f1b" strokeWidth="1.300" fill="none" />
      <g fill="#fff" fontSize="34" fontWeight="500">
        <text x="920" y="576" textAnchor="middle">1a</text>
        <text x="1172" y="1296" textAnchor="middle">2b</text>
        <text x="2128" y="162" textAnchor="middle" fontSize="35">Nur!!! 5s-Chart</text>
      </g>
      <rect x="86" y="162" width="2244" height="5" fill="#f8e652" />
      <rect x="88" y="162" width="312" height="5" fill="#7f762d" />
      <g transform="translate(1180.500 193)" fill="none" stroke="#b5b5b5" strokeWidth="2">
        <circle r="8" fill="#b5b5b5" />
        <path d="m-10-5 4-5M6-10l4 5" />
        <path d="M1-4v4h-4" stroke="#222" />
      </g>
      <g transform="translate(1464 1383)">
        <circle r="14.500" fill="#0c0610" stroke="#8e4bb0" strokeWidth="2" />
        <path d="m3-8-8 9h5l-3 7 8-9H1z" fill="#a45cc8" />
        <circle cx="10" cy="-10" r="6" fill="#000" />
        <circle cx="10" cy="-10" r="4" fill="#dc4747" />
      </g>
      <EventPin x={1629}>
        <EuFlag />
      </EventPin>
      <EventPin x={1876}>
        <EuFlag />
      </EventPin>
      <EventPin x={1917}>
        <UsFlag />
      </EventPin>
    </svg>
  );
}

function Ohlc({ name, value }: { name: string; value: string }) {
  return (
    <span>
      <span className="text-[#b8b8c0]">{name}</span>
      {value}
    </span>
  );
}

function Legend() {
  return (
    <div className="relative flex flex-col items-start px-[10px] text-[18px] text-[#4e4e4e]">
      <div className="flex h-[39px] items-center pt-[3px] text-[#2b5a22]">
        <PairIcon front={<EuFlag />} back={<UsFlag />} ring="#000" className="size-[27px]" />
        <h1 className="ml-[5px] text-[22px] text-[#b8b8c0]">EURUSD · Euro / US-Dollar · 1 · Pepperstone</h1>
        <svg viewBox="0 0 18 18" className="ml-[18px] size-[18px]" fill="#87c27d" aria-hidden="true">
          <path d="M0 0h18l-5 9 5 9H0z" />
        </svg>
        <span className="ml-[28px] flex size-[26px] items-center justify-center rounded-full bg-[#0f241e]">
          <span className="size-3 rounded-full bg-[#4fae92]" />
        </span>
        <p className="ml-[23px] flex gap-[10px]">
          <Ohlc name="O" value="1,145960" />
          <Ohlc name="H" value="1,146000" />
          <Ohlc name="L" value="1,145900" />
          <Ohlc name="C" value="1,145960" />
          <span>−0,000030 (−0,00%)</span>
        </p>
      </div>
      <p className="flex h-[35px] items-center gap-[13px]">
        VRVP Number Of Rows 24 Up/Down
        <Glyph name="hidden" className="size-6 stroke-2 text-[#d0d0d0]" />
      </p>
      <p className="flex h-[35px] items-center gap-[12px] font-medium text-[#b8b8c0]">
        Gap
        <span className="font-semibold text-white">1,143950&nbsp; 1,143960</span>
      </p>
      <p className="flex h-[35px] items-center gap-[13px]">
        <span>Croc 3.0 Chart - Professional No Signal No Signal No Signal No Signal No Signal off off</span>
        <Glyph name="hidden" className="size-6 stroke-2 text-[#d0d0d0]" />
      </p>
      <button aria-label="Legende einklappen" className="mt-[4px] -ml-[4px] flex h-[30px] w-[42px] items-center justify-center rounded-[5px] border border-[#3a3a3a] text-white">
        <svg viewBox="0 0 14 8" className="h-2 w-[14px]" fill="none" stroke="currentColor" strokeWidth="1.800" aria-hidden="true">
          <path d="m1 7 6-5 6 5" />
        </svg>
      </button>
    </div>
  );
}

function PriceAxis() {
  return (
    <div className="relative flex flex-col border-l border-[#262626] pt-[100px] pb-[55px] text-[17px] font-medium text-[#b0b0b8]">
      {PRICES.map((price) => (
        <span key={price} className="flex flex-1 items-center pl-[12px]">
          {price}
        </span>
      ))}
      <select aria-label="Währung" defaultValue="USD" className="absolute top-[3px] left-[5px] h-[37px] w-[87px] appearance-none rounded-[6px] border border-[#3a3a3a] bg-[#0c0c0c] pl-[5px] text-[17px] text-[#dcdcdc]">
        <option>USD</option>
      </select>
      <Glyph name="chevron" className="pointer-events-none absolute top-[8px] right-0 size-7 stroke-2 text-white" />
      <div className="absolute top-[46px] left-0 h-[26px] w-[91px] overflow-hidden rounded-r-[2px] bg-[#6bab58] text-white">
        <span className="block pl-[12px] leading-[22px]">1,145960</span>
        <span className="absolute inset-x-0 top-0 flex h-3 items-end overflow-hidden bg-[#f8e652] pl-[12px] leading-[22px] text-[#111]">
          1,146027
        </span>
      </div>
      <span className="absolute top-[455px] left-0 flex h-7 w-[91px] items-center rounded-r-[2px] bg-white pl-[12px] text-[#0f0f0f]">
        1,143960
      </span>
      <span className="absolute top-[629px] left-0 flex h-8 w-[91px] items-center rounded-r-[2px] bg-[#383a47] pl-[12px] text-white">
        1,143096
      </span>
      <button className="absolute bottom-[8px] left-[17px] h-[30px] w-[29px] rounded-[5px] border border-[#4a4a4a] text-lg text-[#dcdcdc]">A</button>
      <button className="absolute bottom-[8px] left-[52px] h-[30px] w-[29px] rounded-[5px] border border-[#4a4a4a] text-lg text-[#dcdcdc]">L</button>
    </div>
  );
}

function TimeAxis() {
  return (
    <div className="relative flex border-t border-[#262626] pr-[2px] pl-[25px] text-[17px] font-medium text-[#b0b0b8]">
      {TIMES.map((time, i) => (
        <span key={i} className="flex min-w-0 flex-1 items-center justify-center pt-[2px]">
          {time}
        </span>
      ))}
      <span className="absolute top-0 left-[1516px] flex h-9 w-[197px] items-center justify-center gap-[15px] rounded-b-[2px] bg-[#383a47] pt-1 font-semibold whitespace-nowrap text-white">
        <span>Do 31-07-2025</span>
        <span>11:51</span>
      </span>
    </div>
  );
}

function Chart() {
  return (
    <main className="grid min-h-0 flex-1 grid-cols-[minmax(0,1fr)_97px] grid-rows-[minmax(0,1fr)_39px] overflow-hidden rounded-[5px] border-3 border-[#8c8c8c] bg-black">
      <div className="relative overflow-hidden">
        <ChartCanvas />
        <Legend />
        <span className="absolute top-[45px] right-0 flex h-[26px] w-[75px] items-center justify-center rounded-l-[2px] bg-[#6bab58] text-[17px] font-semibold text-white">
          EURUSD
        </span>
        <span className="absolute right-0 bottom-[6px] flex h-[26px] w-[43px] items-center justify-center bg-[#1f2f66] text-base font-semibold text-white">Tief</span>
        <span className="absolute bottom-[20px] left-[14px] text-[#dedede]">
          <Logo className="h-6 w-11" />
        </span>
      </div>
      <PriceAxis />
      <TimeAxis />
      <div className="border-t border-[#262626]" />
    </main>
  );
}

const FLOATING_TOOLS: [GlyphName, string][] = [
  ["channel", "Paralleler Kanal"],
  ["rectangle", "Rechteck"],
  ["extended", "Erweiterte Linie"],
  ["trend", "Trendlinie"],
  ["hline", "Horizontale Linie"],
  ["pin", "Markierung"],
  ["arrowMarker", "Pfeilmarkierung"],
  ["arrow", "Pfeil"],
  ["text", "Text"],
  ["trendFib", "Fib-Extension"],
  ["fan", "Fächer"],
  ["fib", "Fib-Retracement"],
  ["measure", "Preisspanne"],
  ["circle", "Kreis"],
  ["waveAC", "Korrekturwelle"],
  ["waveWZ", "Doppelte Kombination"],
  ["waveAC", "Impulswelle"],
  ["waveWZ", "Dreieckswelle"],
];

function BottomBars() {
  return (
    <>
      <div className="flex h-[56px] shrink-0 items-center gap-[18px] rounded-[5px] bg-[#0f0f0f] pl-[21px] text-[19px] font-medium">
        {RANGES.map((range) => (
          <button key={range}>{range}</button>
        ))}
        <span className="h-8 w-px bg-[#4a4a4a]" />
        <button aria-label="Gehe zu" className="-ml-[4px]">
          <Glyph name="goto" />
        </button>
      </div>
      <div className="mt-[6px] mb-[2px] flex h-[54px] shrink-0 items-center rounded-t-[5px] bg-[#0f0f0f] pl-[23px] font-medium">
        <nav className="flex w-[919px] shrink-0 gap-[44px] text-[20px] whitespace-nowrap">
          <button>Pine Editor</button>
          <button>Strategietester</button>
          <button>Handelsfeld für Wiedergabemodus</button>
          <button>Trading-Panel</button>
        </nav>
        <div className="flex h-full w-[1091px] shrink-0 items-center rounded-[8px] bg-[#1f1f1f] pl-[10px]">
          <span className="mr-[10px] grid w-[14px] grid-cols-2 gap-[6px]">
            {Array.from({ length: 6 }, (_, i) => (
              <span key={i} className="size-[3px] bg-[#5a5a5a]" />
            ))}
          </span>
          <div className="flex min-w-0 flex-1 pr-[55px]">
            {FLOATING_TOOLS.map(([name, label]) => (
              <button key={label} aria-label={label} className="flex min-w-0 flex-1 justify-center">
                <Glyph name={name} />
              </button>
            ))}
          </div>
        </div>
      </div>
    </>
  );
}

function Toast() {
  return (
    <section className="absolute right-[25px] bottom-[20px] flex h-[158px] w-[531px] flex-col rounded-[10px] border border-[#3c3c3c] bg-[#222] px-[22px] text-[#f2f2f2] shadow-2xl">
      <div className="mt-[20px] flex h-6 items-center text-[17px]">
        <span className="flex size-6 items-center justify-center rounded-[4px] bg-[#12182a]">
          <Logo className="h-[10px] w-[18px]" />
        </span>
        <span className="ml-[11px] flex-1">TradingView</span>
        <button aria-label="Optionen" className="flex gap-[5px]">
          <span className="size-[2px] bg-[#ccc]" />
          <span className="size-[2px] bg-[#ccc]" />
          <span className="size-[2px] bg-[#ccc]" />
        </button>
        <button aria-label="Meldung schließen" className="mr-[8px] ml-[44px]">
          <svg viewBox="0 0 14 14" className="size-[14px]" stroke="#ccc" strokeWidth="1.400" aria-hidden="true">
            <path d="m0 0 14 14M14 0 0 14" />
          </svg>
        </button>
      </div>
      <p className="mt-[28px] text-[19px] leading-7">Alarm für EURUSD</p>
      <p className="text-[19px] leading-7 text-[#b4b4b4]">EURUSD, 30s Kreuzend Horizontale Linie</p>
    </section>
  );
}

export default function App() {
  return (
    <div className="relative flex h-screen flex-col overflow-hidden bg-[#2e2e2e] font-['Open_Sans','Noto_Sans',sans-serif] text-[#dbdbdb]">
      <TabStrip />
      <TopBar />
      <div className="flex min-h-0 flex-1 pt-[6px]">
        <LeftToolbar />
        <div className="mx-[6px] flex min-w-0 flex-1 flex-col">
          <Chart />
          <BottomBars />
        </div>
        <RightToolbar />
      </div>
      <Toast />
    </div>
  );
}
